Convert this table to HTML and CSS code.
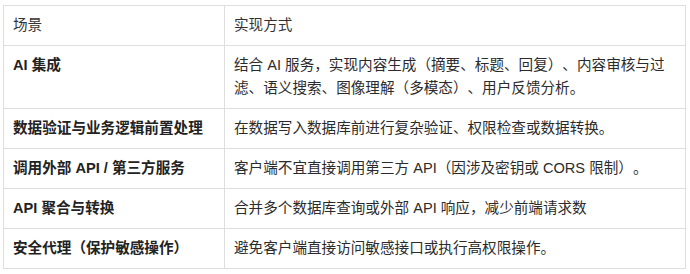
FILE: index.html
```html
<!DOCTYPE html>
<html lang="zh-CN">
<head>
<meta charset="utf-8">
<link rel="stylesheet" href="styles.css">
</head>
<body>
<div class="wrap">
<table class="tbl">
  <colgroup><col class="c1"><col class="c2"></colgroup>
  <thead>
    <tr><th>场景</th><th>实现方式</th></tr>
  </thead>
  <tbody>
    <tr><td class="k">AI 集成</td><td>结合 AI 服务，实现内容生成（摘要、标题、回复）、内容审核与过滤、语义搜索、图像理解（多模态）、用户反馈分析。</td></tr>
    <tr><td class="k">数据验证与业务逻辑前置处理</td><td>在数据写入数据库前进行复杂验证、权限检查或数据转换。</td></tr>
    <tr><td class="k">调用外部 API / 第三方服务</td><td>客户端不宜直接调用第三方 API（因涉及密钥或 CORS 限制）。</td></tr>
    <tr><td class="k">API 聚合与转换</td><td>合并多个数据库查询或外部 API 响应，减少前端请求数</td></tr>
    <tr><td class="k">安全代理（保护敏感操作）</td><td>避免客户端直接访问敏感接口或执行高权限操作。</td></tr>
  </tbody>
</table>
</div>
</body>
</html>
```
FILE: styles.css
```css
html, body {
  margin: 0;
  padding: 0;
  background: #fff;
}
.wrap {
  padding: 5px 0 0 3px;
}
.tbl {
  width: 683px;
  border-collapse: collapse;
  table-layout: fixed;
  font-family: "Liberation Sans", "Noto Sans CJK SC", sans-serif;
  font-size: 14.6px;
  line-height: 23px;
  color: #2b2b2b;
  text-spacing-trim: space-all;
}
.c1 { width: 221px; }
.tbl th, .tbl td {
  border: 1px solid #dedede;
  padding: 8px 9px 8px 9px;
  text-align: left;
  vertical-align: top;
}
.tbl th {
  font-weight: 400;
  color: #333;
}
.tbl td.k {
  font-weight: 700;
  color: #222;
}
```
